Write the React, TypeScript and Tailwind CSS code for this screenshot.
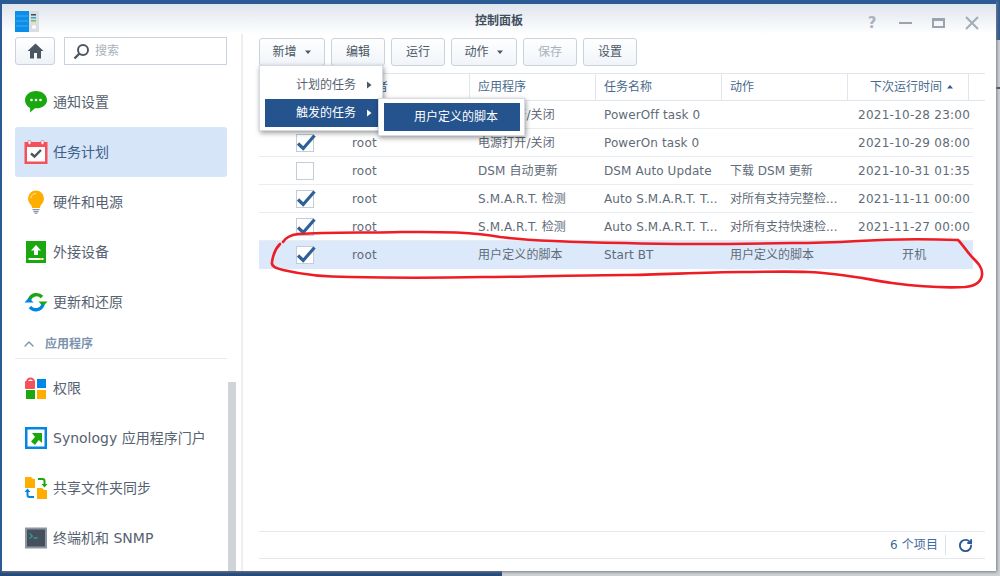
import React from "react";
import { ChevronUp, RotateCw } from "lucide-react";

const latin = "font-['Verdana','DejaVu_Sans','Noto_Sans_CJK_SC',sans-serif]";

const Caret = ({ dir = "down", color = "#4b5a6a" }: { dir?: "down" | "right" | "up"; color?: string }) => (
  <svg width="8" height="8" viewBox="0 0 8 8" className="shrink-0">
    {dir === "down" && <path d="M1 2.500h6L4 6z" fill={color} />}
    {dir === "up" && <path d="M1 5.500h6L4 2z" fill={color} />}
    {dir === "right" && <path d="M2 0.500v7L6.500 4z" fill={color} />}
  </svg>
);

const Btn = ({ label, w, caret, disabled }: { label: string; w: string; caret?: boolean; disabled?: boolean }) => (
  <div
    className={`${w} h-[28px] flex items-center justify-center gap-[7px] rounded-[3px] border border-[#c8d3df] bg-gradient-to-b from-[#ffffff] to-[#f0f4f9] text-[12px] ${
      disabled ? "text-[#a9b2bc]" : "text-[#4a5765]"
    }`}
  >
    <span>{label}</span>
    {caret && <Caret />}
  </div>
);

const IconChat = () => (
  <svg width="24" height="24" viewBox="0 0 24 24">
    <path d="M12 1C5.600 1 1 5 1 10.200c0 3.400 2 6.200 5.200 7.800L6 22.500l5-4.200h1c6.400 0 11-3.600 11-8.100C23 5 18.400 1 12 1z" fill="#1aa80e" />
    <circle cx="7.500" cy="10" r="1.300" fill="#fff" />
    <circle cx="12" cy="10" r="1.300" fill="#fff" />
    <circle cx="16.500" cy="10" r="1.300" fill="#fff" />
  </svg>
);
const IconCal = () => (
  <svg width="24" height="24" viewBox="0 0 24 24">
    <rect x="0.500" y="2" width="23" height="22" fill="#f5515a" />
    <rect x="3" y="7" width="18" height="14.500" fill="#fff" />
    <rect x="4" y="0.500" width="3" height="4" rx="1.400" fill="#fff" stroke="#f5515a" strokeWidth="0.700" />
    <rect x="17" y="0.500" width="3" height="4" rx="1.400" fill="#fff" stroke="#f5515a" strokeWidth="0.700" />
    <path d="M7 13.500l3.500 3L17 10" fill="none" stroke="#4a5560" strokeWidth="2.400" />
  </svg>
);
const IconBulb = () => (
  <svg width="24" height="24" viewBox="0 0 24 24">
    <path d="M12 0.500a8 8 0 0 0-8 8c0 3 1.600 4.800 3 6.500.8 1 1 2 1 3h8c0-1 .2-2 1-3 1.400-1.700 3-3.500 3-6.500a8 8 0 0 0-8-8z" fill="#ffae00" />
    <path d="M6.800 8.500A5 5 0 0 1 12 3.500" fill="none" stroke="#ffd873" strokeWidth="1.300" />
    <rect x="8.500" y="19" width="7" height="1.300" fill="#8b96a0" />
    <rect x="9.500" y="21" width="5" height="1.300" fill="#8b96a0" />
    <rect x="10.500" y="22.700" width="3" height="1.100" fill="#8b96a0" />
  </svg>
);
const IconUp = () => (
  <svg width="24" height="24" viewBox="0 0 24 24">
    <rect x="2" y="1" width="20" height="22" fill="#1aa80e" />
    <path d="M12 5l-5 5.500h3V15h4v-4.500h3z" fill="#fff" />
    <rect x="4.500" y="18" width="15" height="2" fill="#fff" />
    <rect x="15.500" y="18.500" width="2.500" height="1" fill="#ffae00" />
  </svg>
);
const IconSync = () => (
  <svg width="24" height="24" viewBox="0 0 24 24">
    <path d="M5.500 9.500A7.500 7.500 0 0 1 18 7" fill="none" stroke="#1aa80e" strokeWidth="3.400" />
    <path d="M14.500 11.500h9L19 16.500z" fill="#1aa80e" />
    <path d="M19 14.500A7.500 7.500 0 0 1 6 17" fill="none" stroke="#0086e5" strokeWidth="3.400" />
    <path d="M0.500 12.500h9L5 7.500z" fill="#0086e5" />
  </svg>
);
const IconPerm = () => (
  <svg width="24" height="24" viewBox="0 0 24 24">
    <path d="M3 6a3.500 3.500 0 0 1 7 0" fill="none" stroke="#f5515a" strokeWidth="2" />
    <rect x="1" y="5" width="10" height="8" rx="1" fill="#f5515a" />
    <rect x="13" y="3" width="9" height="9" fill="#0086e5" />
    <rect x="2" y="14" width="9" height="9" fill="#1aa80e" />
    <rect x="13" y="14" width="9" height="9" fill="#ffae00" />
  </svg>
);
const IconPortal = () => (
  <svg width="24" height="24" viewBox="0 0 24 24">
    <rect x="1" y="1" width="22" height="22" fill="#0086e5" />
    <rect x="3.500" y="3.500" width="17" height="17" fill="#fff" />
    <path d="M8 7h10v10l-3.200-3-3.800 5-4-3.400 4-4.600z" fill="#1aa80e" />
  </svg>
);
const IconShare = () => (
  <svg width="24" height="24" viewBox="0 0 24 24">
    <path d="M1 1h6l2 2h2v9H1z" fill="#ffae00" />
    <path d="M13 13h5l2 2h3v9H13z" fill="#ffae00" transform="translate(0 -1)" />
    <path d="M14 3h4.500a2 2 0 0 1 2 2v4" fill="none" stroke="#1aa80e" strokeWidth="2" />
    <path d="M17.500 8h6l-3 3.500z" fill="#1aa80e" />
    <path d="M10 21H5.500a2 2 0 0 1-2-2v-4" fill="none" stroke="#0086e5" strokeWidth="2" />
    <path d="M0.500 16h6l-3-3.500z" fill="#0086e5" />
  </svg>
);
const IconTerm = () => (
  <svg width="24" height="24" viewBox="0 0 24 24">
    <rect x="1" y="1.500" width="22" height="21" fill="#8a96a2" />
    <rect x="3" y="3.500" width="18" height="17" fill="#46505c" />
    <path d="M5.500 7.500l3 2.500-3 2.500" fill="none" stroke="#1ec8b0" strokeWidth="1" />
    <path d="M9.500 12h4" stroke="#1ec8b0" strokeWidth="1" />
  </svg>
);

const NavItem = ({ icon, label, active }: { icon: React.ReactNode; label: string; active?: boolean }) => (
  <div className={`h-[50px] flex items-center gap-[6px] pl-[9px] rounded-[3px] text-[14px] ${active ? "bg-[#d6e5f7] text-[#3d5f8a]" : "text-[#566270]"}`}>
    <span className="w-[24px] h-[24px] flex items-center justify-center shrink-0">{icon}</span>
    <span className={`ml-[-1px] whitespace-nowrap ${latin}`}>{label}</span>
  </div>
);

const Checkbox = ({ on }: { on: boolean }) => (
  <div className="relative w-[18px] h-[18px] border border-[#c4ccd6] bg-white">
    {on && (
      <svg width="20" height="20" viewBox="0 0 20 20" className="absolute left-[-1px] top-[-3px]">
        <path d="M2 11.500L7.200 16.500L18.500 3.500" fill="none" stroke="#2f6199" strokeWidth="3.200" />
      </svg>
    )}
  </div>
);

const rows = [
  { on: true, user: "root", app: "电源打开/关闭", name: "PowerOff task 0", act: "", time: "2021-10-28 23:00" },
  { on: true, user: "root", app: "电源打开/关闭", name: "PowerOn task 0", act: "", time: "2021-10-29 08:00" },
  { on: false, user: "root", app: "DSM 自动更新", name: "DSM Auto Update", act: "下载 DSM 更新", time: "2021-10-31 01:35" },
  { on: true, user: "root", app: "S.M.A.R.T. 检测", name: "Auto S.M.A.R.T. T...", act: "对所有支持完整检...", time: "2021-11-11 00:00" },
  { on: true, user: "root", app: "S.M.A.R.T. 检测", name: "Auto S.M.A.R.T. T...", act: "对所有支持快速检...", time: "2021-11-27 00:00" },
  { on: true, user: "root", app: "用户定义的脚本", name: "Start BT", act: "用户定义的脚本", time: "开机", sel: true },
];

const Row = ({ r }: { r: (typeof rows)[number] & { sel?: boolean } }) => (
  <div className={`h-[28px] w-[714px] flex items-center text-[12px] text-[#5f6b78] border-b ${r.sel ? "bg-[#dbe9fa] border-transparent" : "border-[#e9edf1]"}`}>
    <div className="w-[37px] shrink-0" />
    <div className="w-[56px] shrink-0 flex"><Checkbox on={r.on} /></div>
    <div className="w-[126px] shrink-0 tracking-[0.2px]">{r.user}</div>
    <div className="w-[126px] shrink-0 whitespace-nowrap tracking-[0.1px]">{r.app}</div>
    <div className="w-[126px] shrink-0 whitespace-nowrap tracking-[0.1px]">{r.name}</div>
    <div className="w-[128px] shrink-0 whitespace-nowrap">{r.act}</div>
    <div className={`flex-1 whitespace-nowrap tracking-[0.25px] ${r.sel ? "pl-[44px]" : ""}`}>{r.time}</div>
  </div>
);

const HeadCell = ({ w, children, right }: { w: string; children?: React.ReactNode; right?: boolean }) => (
  <div className={`${w} h-full shrink-0 flex items-center gap-[4px] border-r border-[#dfe6ee] ${right ? "pl-[22px]" : "pl-[8px]"}`}>{children}</div>
);

export default function App() {
  return (
    <div className={`relative w-[1000px] h-[576px] overflow-hidden bg-[#cfd2d5] ${latin}`}>
      {/* the desktop behind the window */}
      <div className="absolute left-0 bottom-0 w-[502px] h-[6px] bg-[#24497c]" />
      <div className="absolute right-0 top-0 w-[6px] h-[40px] bg-[#2c5a94]" />
      <div className="absolute right-0 top-[87px] w-[4px] h-[2px] bg-[#4b5662]" />

      <div className="relative w-[996px] h-[571px] flex flex-col bg-white border-l-2 border-t-4 border-[#2c5a94] shadow-[1px_1px_3px_#777c82]">
        {/* title bar */}
        <div className="h-[30px] shrink-0 grid grid-cols-[1fr_auto_1fr] items-center bg-gradient-to-b from-[#dfe5ed] to-[#ffffff]">
          <svg width="24" height="22" viewBox="0 0 24 22" className="ml-[13px] mt-[5px]">
            <rect x="0" y="0" width="14" height="21" fill="#0a8ee8" />
            <path d="M1 5h12M1 10h12M1 15h12" stroke="#5cbcf5" strokeWidth="0.700" />
            <rect x="14" y="0" width="10" height="21" fill="#d9dee3" />
            <rect x="16" y="3" width="5" height="1.500" fill="#3f4d5c" />
            <rect x="16" y="6" width="5" height="1.500" fill="#2ba8e8" />
            <rect x="16" y="9" width="5" height="1.500" fill="#8ab93a" />
            <circle cx="19" cy="16" r="2" fill="#fff" />
          </svg>
          <div className="text-center text-[12px] text-[#3f4d5c] font-bold mt-[3px]">控制面板</div>
          <div className="flex items-center justify-end gap-[20px] pr-[17px] mt-[8px]">
            <span className="w-[14px] text-center text-[15px] leading-none font-bold text-[#aab3bd]">?</span>
            <span className="w-[13px] h-[2px] bg-[#9aa4ae]" />
            <span className="w-[13px] h-[10px] border-[2px] border-t-[3px] border-[#9aa4ae]" />
            <svg width="14" height="14" viewBox="0 0 14 14"><path d="M1 1l12 12M13 1L1 13" stroke="#a3adb7" strokeWidth="2" /></svg>
          </div>
        </div>
        <div className="flex-1 min-h-0 flex">
          {/* sidebar */}
          <div className="relative w-[241px] shrink-0 border-r-2 border-[#eceef1] pl-[13px] pt-[3px]">
            <div className="w-[212px] flex gap-[9px]">
              <div className="w-[40px] h-[28px] rounded-[3px] border border-[#c8d3df] bg-gradient-to-b from-[#ffffff] to-[#eef3f8] flex items-center justify-center">
                <svg width="17" height="16" viewBox="0 0 17 16"><path d="M8.500 0.500L0.500 8h2.500v7.500h4V10h3v5.500h4V8h2.500z" fill="#4b5662" /></svg>
              </div>
              <div className="flex-1 h-[28px] border border-[#c8d3df] flex items-center pl-[8px] gap-[5px] text-[12px] text-[#a9b2bc]">
                <svg width="17" height="17" viewBox="0 0 17 17"><circle cx="10" cy="7" r="5" fill="none" stroke="#4b5662" strokeWidth="2" /><path d="M6.500 10.500L1.500 15.500" stroke="#4b5662" strokeWidth="2.400" /></svg>
                <span>搜索</span>
              </div>
            </div>
            <div className="w-[212px] mt-[12px]">
              <NavItem icon={<IconChat />} label="通知设置" />
              <NavItem icon={<IconCal />} label="任务计划" active />
              <NavItem icon={<IconBulb />} label="硬件和电源" />
              <NavItem icon={<IconUp />} label="外接设备" />
              <NavItem icon={<IconSync />} label="更新和还原" />
              <div className="h-[29px] mt-[2px] flex items-center border-b border-[#e6e9ed] text-[12px] font-bold text-[#7b93ad] pl-[6px] gap-[8px] box-content">
                <ChevronUp size={16} strokeWidth={2} className="text-[#7b93ad]" />
                <span>应用程序</span>
              </div>
              <div className="mt-[4px]">
                <NavItem icon={<IconPerm />} label="权限" />
                <NavItem icon={<IconPortal />} label="Synology 应用程序门户" />
                <NavItem icon={<IconShare />} label="共享文件夹同步" />
                <NavItem icon={<IconTerm />} label="终端机和 SNMP" />
              </div>
            </div>
            <div className="absolute left-[226px] top-[348px] bottom-0 w-[8px] bg-[#d0d4d8]" />
          </div>
          {/* main */}
          <div className="flex-1 min-w-0 flex flex-col pl-[16px] pt-[4px]">
            <div className="flex gap-[6px]">
              <Btn label="新增" w="w-[66px]" caret />
              <Btn label="编辑" w="w-[54px]" />
              <Btn label="运行" w="w-[54px]" />
              <Btn label="动作" w="w-[66px]" caret />
              <Btn label="保存" w="w-[54px]" disabled />
              <Btn label="设置" w="w-[54px]" />
            </div>
            <div className="mt-[7px] h-[28px] w-[726px] flex items-center border-t border-b border-[#dfe6ee] text-[12px] text-[#4a6a8c]">
              <HeadCell w="w-[85px]" />
              <HeadCell w="w-[126px]">使用者</HeadCell>
              <HeadCell w="w-[126px]">应用程序</HeadCell>
              <HeadCell w="w-[126px]">任务名称</HeadCell>
              <HeadCell w="w-[126px]">动作</HeadCell>
              <HeadCell w="w-[121px]" right>下次运行时间<Caret dir="up" color="#2c5a94" /></HeadCell>
            </div>
            {rows.map((r, i) => <Row key={i} r={r} />)}
            <div className="mt-auto w-[726px] h-[26px] mb-[12px] box-content border-t border-b border-[#e3e8ee] flex items-center justify-end text-[12px] text-[#3c6a9c]">
              <span className="pr-[7px] tracking-[0.1px]">6 个项目</span>
              <span className="h-[20px] border-l border-[#dde2e8]" />
              <RotateCw size={15} strokeWidth={3} className="mx-[12px] text-[#2c5a94]" />
            </div>
          </div>
        </div>
      </div>

      {/* dropdown menu */}
      <div className="absolute left-[259px] top-[65px] w-[124px] h-[66px] bg-white border border-[#d5dbe2] shadow-[1px_2px_5px_rgba(0,0,0,0.4)] pt-[5px] pl-[5px] text-[12px]">
        <div className="h-[28px] w-[114px] flex items-center pl-[31px] gap-[9px] text-[#566270]">
          <span>计划的任务</span><Caret dir="right" color="#4b5662" />
        </div>
        <div className="h-[28px] w-[114px] flex items-center pl-[31px] gap-[9px] bg-[#24538d] text-white">
          <span>触发的任务</span><Caret dir="right" color="#ffffff" />
        </div>
      </div>
      <div className="absolute left-[378px] top-[98px] w-[147px] h-[38px] bg-white border border-[#d5dbe2] shadow-[1px_2px_5px_rgba(0,0,0,0.4)] p-[4px] pl-[5px] text-[12px]">
        <div className="h-[28px] w-[136px] flex items-center pl-[30px] bg-[#24538d] text-white">用户定义的脚本</div>
      </div>

      {/* hand-drawn red mark */}
      <svg className="absolute inset-0 pointer-events-none" width="1000" height="576" viewBox="0 0 1000 576">
        <path
          d="M283 242 C 286 237 290 235 298 234 C 330 232 370 233 400 232 C 430 232 470 231 500 237 C 530 241 570 242 625 243 C 680 245 740 244 792 243 C 820 243 840 242 858 241 C 890 239 930 239 958 240 C 963 245 968 253 972 257 C 978 263 983 268 982 275 C 981 283 975 286 965 287 C 945 288 915 286 892 283 C 865 279 840 273 808 272 C 785 271 765 272 742 272 C 700 272 660 275 625 275 C 580 275 530 277 483 277 C 440 278 390 278 350 277 C 320 277 300 274 283 270 C 275 268 271 266 272 262 C 273 255 276 248 280 244"
          fill="none"
          stroke="#ee1c25"
          strokeWidth="2.600"
          strokeLinecap="round"
        />
      </svg>
    </div>
  );
}
